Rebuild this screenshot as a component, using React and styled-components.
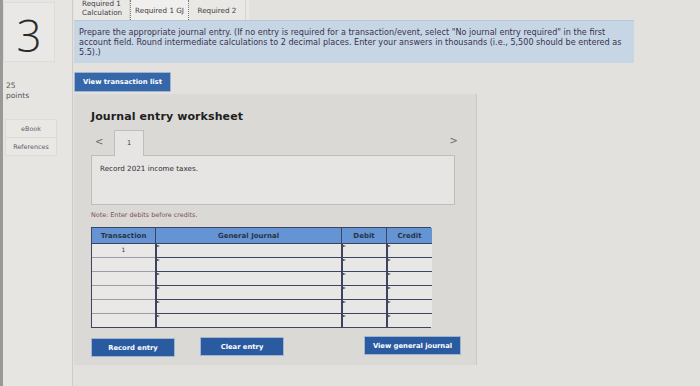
import React from 'react';
import styled, { createGlobalStyle } from 'styled-components';

const Global = createGlobalStyle`
  html, body {
    margin: 0;
    padding: 0;
    width: 700px;
    height: 386px;
    overflow: hidden;
    background: #e2e1de;
    font-family: "DejaVu Sans", Verdana, sans-serif;
  }
`;

const Page = styled.div`
  display: flex;
  width: 700px;
  height: 386px;
  border-left: 3px solid #9a9997;
  box-sizing: border-box;
`;

const Sidebar = styled.div`
  width: 70px;
  flex-shrink: 0;
  background: #e6e5e2;
  border-right: 1px solid #cdccc9;
  padding-top: 2px;
  box-sizing: border-box;
`;

const NumberBox = styled.div`
  width: 52px;
  height: 60px;
  background: #e9e8e6;
  border: 1px solid #dddcd9;
  display: flex;
  align-items: center;
  justify-content: center;
  padding-top: 6px;
  box-sizing: border-box;
  font-size: 44px;
  font-weight: 300;
  color: #2a2a2a;
  font-family: "Open Sans", "DejaVu Sans", sans-serif;
`;

const Points = styled.div`
  margin: 19px 0 0 3px;
  font-size: 7.5px;
  line-height: 10px;
  color: #55555a;
`;

const ResourceBox = styled.div`
  margin: 18px 0 0 2px;
  width: 50px;
  border: 1px solid #dcdbd8;
  background: #e9e8e5;
`;

const ResourceItem = styled.div`
  height: 17px;
  display: flex;
  align-items: center;
  justify-content: center;
  font-size: 6.4px;
  color: #5c5c66;
  border-top: ${({ first }) => (first ? 'none' : '1px solid #dcdbd8')};
`;

const Main = styled.div`
  flex: 1;
  display: flex;
  flex-direction: column;
  padding-left: 1px;
`;

const TabBar = styled.div`
  height: 20px;
  display: flex;
  align-items: flex-end;
  padding-left: 3px;
  overflow: hidden;
  width: 172px;
  background: #e9e8e5;
`;

const Tab = styled.div`
  height: ${({ tall }) => (tall ? '25px' : '20px')};
  padding: ${({ tall }) => (tall ? '0 7px 0 5px' : '0 4px 0 4px')};
  display: flex;
  align-items: center;
  font-size: 7.2px;
  line-height: 9px;
  color: #3c3c44;
  background: ${({ active }) => (active ? '#f0efed' : '#e9e8e5')};
  border-left: ${({ active }) => (active ? '1px dotted #7a7a7a' : 'none')};
  border-right: ${({ active }) => (active ? '1px dotted #7a7a7a' : '1px solid #d5d4d1')};
  white-space: nowrap;
  min-width: ${({ wide }) => (wide ? '48px' : 'auto')};
  justify-content: ${({ wide }) => (wide ? 'center' : 'flex-start')};
`;

const Instructions = styled.div`
  width: 560px;
  background: #c6d6e4;
  border-top: 1px solid #b7c8d8;
  padding: 6px 6px 6px 5px;
  box-sizing: border-box;
  font-size: 8.1px;
  line-height: 10px;
  color: #3b3150;
`;

const BlueButton = styled.button`
  font-family: "DejaVu Sans", Verdana, sans-serif;
  font-weight: bold;
  font-size: 6.8px;
  color: #fff;
  background: ${({ light }) => (light ? '#3567a9' : '#2a5a9f')};
  border: 1px solid #9fb5d3;
  border-radius: 1px;
  width: ${({ w }) => w}px;
  height: ${({ h }) => h || 19}px;
  padding: 0;
  cursor: pointer;
`;

const TopButtonRow = styled.div`
  margin-top: 6px;
`;

const Worksheet = styled.div`
  margin-top: 2px;
  width: 403px;
  height: 271px;
  background: #dad9d6;
  border-right: 1px solid #c9c8c5;
  padding: 16px 0 0 17px;
  box-sizing: border-box;
`;

const Title = styled.div`
  font-size: 11px;
  font-weight: bold;
  color: #1e1e22;
  letter-spacing: 0.1px;
`;

const NavRow = styled.div`
  display: flex;
  align-items: flex-end;
  margin-top: 6px;
  width: 364px;
  height: 26px;
`;

const Arrow = styled.div`
  font-size: 10px;
  color: #6a6a6e;
  padding: 0 0 8px 4px;
  width: 23px;
  box-sizing: border-box;
`;

const PageTab = styled.div`
  width: 30px;
  height: 26px;
  box-sizing: border-box;
  background: #e6e5e3;
  border: 1px solid #bebdba;
  border-bottom: none;
  font-size: 6.5px;
  color: #333;
  display: flex;
  justify-content: center;
  padding-top: 8px;
  margin-bottom: -1px;
  position: relative;
  z-index: 1;
`;

const NextArrow = styled(Arrow)`
  margin-left: auto;
  padding: 0 0 9px 0;
  width: auto;
  margin-right: -3px;
`;

const RecordBox = styled.div`
  width: 364px;
  height: 50px;
  box-sizing: border-box;
  background: #e6e5e3;
  border: 1px solid #bebdba;
  padding: 8px 8px;
  font-size: 7.2px;
  color: #2e2e34;
`;

const Note = styled.div`
  margin-top: 6px;
  font-size: 6.4px;
  color: #7b4e55;
`;

const Table = styled.div`
  margin-top: 8px;
  width: 340px;
  display: grid;
  grid-template-columns: 63px 186px 45px 46px;
  border: 1px solid #3c4460;
  box-sizing: border-box;
`;

const HeadCell = styled.div`
  height: 15px;
  background: #6494d4;
  border-left: ${({ first }) => (first ? 'none' : '1px solid #3c4460')};
  font-size: 7px;
  font-weight: bold;
  color: #2a3346;
  display: flex;
  align-items: center;
  justify-content: center;
  border-bottom: 1px solid #3c4460;
`;

const Cell = styled.div`
  height: 11px;
  background: #e7e7e6;
  border-left: ${({ first }) => (first ? 'none' : '2px solid #3c4460')};
  border-top: ${({ top }) => (top ? 'none' : '1px solid #3c4460')};
  font-size: 6px;
  color: #333;
  display: flex;
  justify-content: center;
  padding-top: 2px;
  position: relative;
  &::before {
    content: '';
    display: ${({ first }) => (first ? 'none' : 'block')};
    position: absolute;
    left: 0;
    top: 1px;
    border-left: 3px solid #3c4460;
    border-top: 1.5px solid transparent;
    border-bottom: 1.5px solid transparent;
  }
`;

const TxCell = styled(Cell)`
  border-top: ${({ top }) => (top ? 'none' : '1px solid #9a9da6')};
  background: #e9e8e7;
`;

const BottomButtons = styled.div`
  margin-top: 8px;
  display: flex;
  align-items: flex-start;
  width: 370px;
`;

const rows = [0, 1, 2, 3, 4, 5];

export default function App() {
  return (
    <>
      <Global />
      <Page>
        <Sidebar>
          <NumberBox>3</NumberBox>
          <Points>
            25
            <br />
            points
          </Points>
          <ResourceBox>
            <ResourceItem first>eBook</ResourceItem>
            <ResourceItem>References</ResourceItem>
          </ResourceBox>
        </Sidebar>
        <Main>
          <TabBar>
            <Tab tall>
              Required 1
              <br />
              Calculation
            </Tab>
            <Tab active>Required 1 GJ</Tab>
            <Tab wide>Required 2</Tab>
          </TabBar>
          <Instructions>
            Prepare the appropriate journal entry. (If no entry is required for a transaction/event, select "No journal entry required" in the first account field. Round intermediate calculations to 2 decimal places. Enter your answers in thousands (i.e., 5,500 should be entered as 5.5).)
          </Instructions>
          <TopButtonRow>
            <BlueButton light w={97} h={20}>View transaction list</BlueButton>
          </TopButtonRow>
          <Worksheet>
            <Title>Journal entry worksheet</Title>
            <NavRow>
              <Arrow>&lt;</Arrow>
              <PageTab>1</PageTab>
              <NextArrow>&gt;</NextArrow>
            </NavRow>
            <RecordBox>Record 2021 income taxes.</RecordBox>
            <Note>Note: Enter debits before credits.</Note>
            <Table>
              <HeadCell first>Transaction</HeadCell>
              <HeadCell>General Journal</HeadCell>
              <HeadCell>Debit</HeadCell>
              <HeadCell>Credit</HeadCell>
              {rows.map((r) => (
                <React.Fragment key={r}>
                  <TxCell first top={r === 0}>{r === 0 ? '1' : ''}</TxCell>
                  <Cell top={r === 0} />
                  <Cell top={r === 0} />
                  <Cell top={r === 0} />
                </React.Fragment>
              ))}
            </Table>
            <BottomButtons>
              <BlueButton w={84} style={{ marginTop: 2 }}>Record entry</BlueButton>
              <BlueButton w={84} style={{ marginLeft: 25, marginTop: 1 }}>Clear entry</BlueButton>
              <BlueButton w={97} style={{ marginLeft: 'auto' }}>View general journal</BlueButton>
            </BottomButtons>
          </Worksheet>
        </Main>
      </Page>
    </>
  );
}
